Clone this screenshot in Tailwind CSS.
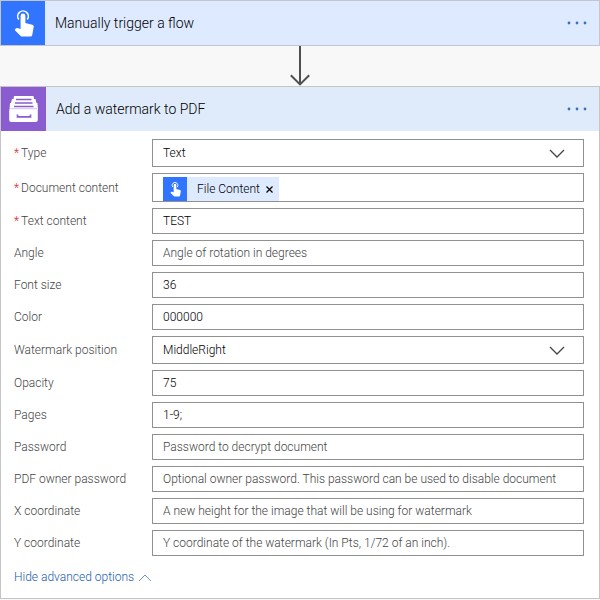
<!DOCTYPE html>
<html lang="en">
<head>
  <meta charset="UTF-8" />
  <meta name="viewport" content="width=device-width, initial-scale=1.0"/>
  <title>Add a watermark to PDF</title>
  <script src="https://cdn.jsdelivr.net/npm/@tailwindcss/browser@4"></script>
</head>
<body class="bg-[#f8f8f8] font-['Roboto','Open_Sans',sans-serif] text-[12px] leading-4 font-light text-black">
  <!-- Shared icons -->
  <svg class="hidden">
    <symbol id="tap" viewBox="0 0 44 44">
      <path d="M17.8 18.500a5.300 5.300 0 1 1 8.400 0" fill="none" stroke="currentColor" stroke-width="1.600"/>
      <path d="M19.600 15a2.400 2.400 0 0 1 4.800 0v7l6.800 1.700c1 .3 1.700 1 1.500 2.200l-1.500 8.300q-.3 1.400-1.600 1.400h-8.200q-1 0-1.700-.7l-6.100-6 1.200-1.500q.6-.6 1.500-.4l3.300.9z" fill="currentColor"/>
    </symbol>
    <symbol id="dots" viewBox="0 0 20 4">
      <circle cx="2" cy="2" r="1.400" fill="currentColor"/>
      <circle cx="10" cy="2" r="1.400" fill="currentColor"/>
      <circle cx="18" cy="2" r="1.400" fill="currentColor"/>
    </symbol>
    <symbol id="chevron" viewBox="0 0 16 9">
      <path d="M1 1l7 7 7-7" fill="none" stroke="currentColor" stroke-width="1.300"/>
    </symbol>
  </svg>

  <main>
    <!-- Trigger -->
    <section class="flex items-center border border-[#c5c5cf] bg-[#deeaff]">
      <div class="size-11 bg-[#3074ff] text-white"><svg class="size-11"><use href="#tap"/></svg></div>
      <h2 class="ml-2.5 flex-1 text-[14px] leading-5">Manually trigger a flow</h2>
      <button type="button" aria-label="Trigger menu" class="mr-3 text-[#3a72c0]"><svg class="h-1 w-5"><use href="#dots"/></svg></button>
    </section>

    <!-- Connector arrow -->
    <div class="flex h-10 justify-center text-[#505050]">
      <svg class="h-10 w-5" viewBox="0 0 20 40" fill="none" stroke="currentColor" stroke-width="2"><path d="M10 0v38M.8 29.200L10 38.400l9.200-9.200"/></svg>
    </div>

    <!-- Action -->
    <section class="border border-[#c5c5c8] bg-white">
      <header class="flex items-center bg-[#dfebfa]">
        <div class="h-11 w-[45px] bg-[#8a5cd0] text-white">
          <svg class="h-11 w-[45px]" viewBox="0 0 45 44">
            <path d="M13 9h19.500l.5 3h1.500l1 4h1l.5 7H8.500l.5-7h1l1-4h1.500z" fill="currentColor"/>
            <path d="M15 12.500h15.500M14 16h17.500M13 19.500h19.500" stroke="#8a5cd0" stroke-width="1.300"/>
            <path d="M9.500 21h26.500v1.500H9.500z" fill="#dccdf2"/>
            <path d="M9.500 22.500h26q1.300 0 1.300 1.300V33q0 2-2 2H10.200q-2 0-2-2v-9.200q0-1.300 1.300-1.300z" fill="currentColor"/>
            <path d="M16.500 27.500v2.300h13v-2.300" fill="none" stroke="#8a5cd0" stroke-width="1.700"/>
          </svg>
        </div>
        <h2 class="ml-2.5 flex-1 text-[14px] leading-5">Add a watermark to PDF</h2>
        <button type="button" aria-label="Action menu" class="mr-3 text-[#3a72c0]"><svg class="h-1 w-5"><use href="#dots"/></svg></button>
      </header>

      <form class="flex flex-col gap-1.5 pt-2 pr-[15px] pb-[13px] pl-[13px]">
        <div class="flex items-center">
          <label for="type" class="w-[138px] text-[#444]"><span class="mr-0.5 text-[#d8232f]">*</span>Type</label>
          <div class="relative flex-1">
            <select id="type" class="block h-7 w-full appearance-none border border-[#919191] bg-white px-2.5 outline-none"><option>Text</option></select>
            <svg class="pointer-events-none absolute top-[10px] right-[19px] h-[9px] w-4 text-[#444]"><use href="#chevron"/></svg>
          </div>
        </div>
        <div class="flex items-center">
          <label for="document" class="w-[138px] text-[#444]"><span class="mr-0.5 text-[#d8232f]">*</span>Document content</label>
          <div class="flex h-[29px] min-w-0 flex-1 items-end border border-[#919191] bg-white px-2.5">
            <span class="flex h-6 items-center bg-[#deeaff]">
              <span class="size-6 bg-[#3074ff] text-white"><svg class="size-6"><use href="#tap"/></svg></span>
              <span class="ml-2.5">File Content</span>
              <button type="button" aria-label="Remove File Content" class="px-1.5"><svg class="size-[7px]" viewBox="0 0 7 7"><path d="M.5.5l6 6M6.500.500l-6 6" stroke="currentColor" stroke-width="1.200"/></svg></button>
            </span>
            <input id="document" type="text" class="h-6 min-w-0 flex-1 outline-none"/>
          </div>
        </div>
        <div class="flex items-center">
          <label for="text" class="w-[138px] text-[#444]"><span class="mr-0.5 text-[#d8232f]">*</span>Text content</label>
          <input id="text" type="text" value="TEST" class="h-[26px] min-w-0 flex-1 border border-[#919191] px-2.5 outline-none"/>
        </div>
        <div class="flex items-center">
          <label for="angle" class="w-[138px] text-[#444]">Angle</label>
          <input id="angle" type="text" placeholder="Angle of rotation in degrees" class="h-[26px] min-w-0 flex-1 border border-[#919191] px-2.5 outline-none placeholder:text-[#444]"/>
        </div>
        <div class="flex items-center">
          <label for="size" class="w-[138px] text-[#444]">Font size</label>
          <input id="size" type="text" value="36" class="h-[26px] min-w-0 flex-1 border border-[#919191] px-2.5 outline-none"/>
        </div>
        <div class="flex items-center">
          <label for="color" class="w-[138px] text-[#444]">Color</label>
          <input id="color" type="text" value="000000" class="h-[26px] min-w-0 flex-1 border border-[#919191] px-2.5 outline-none"/>
        </div>
        <div class="flex items-center">
          <label for="position" class="w-[138px] text-[#444]">Watermark position</label>
          <div class="relative flex-1">
            <select id="position" class="block h-7 w-full appearance-none border border-[#919191] bg-white px-2.5 outline-none"><option>MiddleRight</option></select>
            <svg class="pointer-events-none absolute top-[10px] right-[19px] h-[9px] w-4 text-[#444]"><use href="#chevron"/></svg>
          </div>
        </div>
        <div class="flex items-center">
          <label for="opacity" class="w-[138px] text-[#444]">Opacity</label>
          <input id="opacity" type="text" value="75" class="h-[26px] min-w-0 flex-1 border border-[#919191] px-2.5 outline-none"/>
        </div>
        <div class="flex items-center">
          <label for="pages" class="w-[138px] text-[#444]">Pages</label>
          <input id="pages" type="text" value="1-9;" class="h-[26px] min-w-0 flex-1 border border-[#919191] px-2.5 outline-none"/>
        </div>
        <div class="flex items-center">
          <label for="password" class="w-[138px] text-[#444]">Password</label>
          <input id="password" type="text" placeholder="Password to decrypt document" class="h-[26px] min-w-0 flex-1 border border-[#919191] px-2.5 outline-none placeholder:text-[#444]"/>
        </div>
        <div class="flex items-center">
          <label for="owner" class="w-[138px] text-[#444]">PDF owner password</label>
          <input id="owner" type="text" placeholder="Optional owner password. This password can be used to disable document" class="h-[26px] min-w-0 flex-1 border border-[#919191] px-2.5 outline-none placeholder:text-[#444]"/>
        </div>
        <div class="flex items-center">
          <label for="x" class="w-[138px] text-[#444]">X coordinate</label>
          <input id="x" type="text" placeholder="A new height for the image that will be using for watermark" class="h-[26px] min-w-0 flex-1 border border-[#919191] px-2.5 outline-none placeholder:text-[#444]"/>
        </div>
        <div class="flex items-center">
          <label for="y" class="w-[138px] text-[#444]">Y coordinate</label>
          <input id="y" type="text" placeholder="Y coordinate of the watermark (In Pts, 1/72 of an inch)." class="h-[26px] min-w-0 flex-1 border border-[#919191] px-2.5 outline-none placeholder:text-[#444]"/>
        </div>
        <a href="#" class="mt-[7px] flex items-center gap-1 self-start text-[#1a5cae]">Hide advanced options
          <svg class="h-[9px] w-3.5 rotate-180 text-[#6f94c4]" viewBox="0 0 14 9"><path d="M1 1l6 6 6-6" fill="none" stroke="currentColor"/></svg>
        </a>
      </form>
    </section>
  </main>
</body>
</html>
